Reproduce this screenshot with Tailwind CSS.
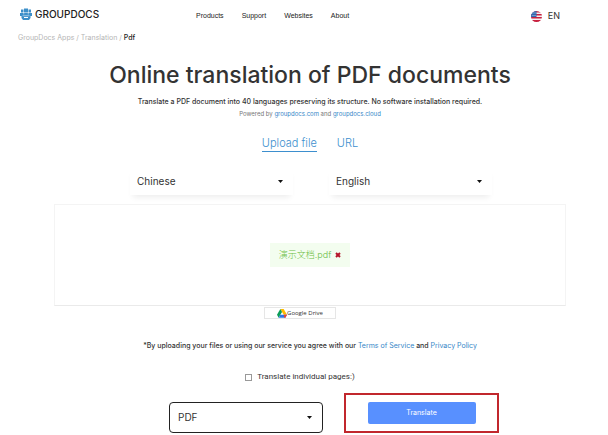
<!DOCTYPE html>
<html lang="en">
<head>
    <meta charset="UTF-8">
    <meta name="viewport" content="width=device-width, initial-scale=1.0">
    <title>Online translation of PDF documents</title>
    <script src="https://cdn.jsdelivr.net/npm/@tailwindcss/browser@4"></script>
</head>
<body class="bg-white text-[#333] font-['Inter','Noto_Sans_CJK_SC',sans-serif]">
    <!-- Header -->
    <header class="grid grid-cols-[176px_1fr_auto] items-center h-7 pl-5 pr-12">
        <a href="#" class="flex items-center gap-[3px] text-[10px] font-medium text-[#222]">
            <svg class="w-3 h-3" viewBox="0 0 24 24" fill="#3c8fc9">
                <path d="M8 1h8v8H8zM2 3h5v6H2zM17 3h5v6h-5z"/>
                <path d="M0 10h24v6H0z"/>
                <path d="M3 15h18v5l-3 4H6l-3-4z"/>
                <path d="M7.500 9v4M16.500 9v4M5 15.500h14" stroke="#fff" stroke-width="1"/>
                <path d="M8 18h8v2H8z" fill="#fff"/>
            </svg>
            GROUPDOCS
        </a>
        <nav class="flex gap-[18px] pt-1 text-[7px] text-[#222] font-['Liberation_Sans',sans-serif]">
            <a href="#">Products</a>
            <a href="#">Support</a>
            <a href="#">Websites</a>
            <a href="#">About</a>
        </nav>
        <a href="#" class="flex items-center gap-[6px] pt-1 text-[9px]">
            <svg class="w-[11px] h-[11px]" viewBox="0 0 22 22">
                <clipPath id="flag"><circle cx="11" cy="11" r="11"/></clipPath>
                <g clip-path="url(#flag)">
                    <path fill="#f4f0f2" d="M0 0h22v22H0z"/>
                    <path fill="#c8213f" d="M0 0h22v3H0zM0 6h22v3H0zM0 12h22v3H0zM0 18h22v4H0z"/>
                    <path fill="#2f69b0" d="M0 0h11v12H0z"/>
                    <path fill="#b9cfe8" d="M3 3h2v2H3zM7 3h2v2H7zM3 8h2v2H3zM7 8h2v2H7z"/>
                </g>
            </svg>
            EN
        </a>
    </header>

    <!-- Breadcrumb -->
    <nav class="h-5 pl-[18px] text-[7px] leading-5 text-[#b5b5b5]">
        <a href="#">GroupDocs Apps</a> / <a href="#">Translation</a> / <span class="font-medium text-[#222]">Pdf</span>
    </nav>

    <main class="flex flex-col items-center pl-3 text-[7px]">
        <h1 class="mt-[11px] text-[23px] leading-8 font-medium">Online translation of PDF documents</h1>
        <p class="mt-[3px] leading-4 font-medium">Translate a PDF document into 40 languages preserving its structure. No software installation required.</p>
        <p class="text-[6px] leading-2 text-[#777]">Powered by <a href="#" class="text-[#3486c7]">groupdocs.com</a> and <a href="#" class="text-[#3486c7]">groupdocs.cloud</a></p>

        <div class="flex gap-5 mt-[17px] text-[11px] leading-4 text-[#3d8fce] font-light">
            <button type="button" class="border-b border-[#3d8fce]">Upload file</button>
            <button type="button" class="border-b border-transparent">URL</button>
        </div>

        <!-- Languages -->
        <div class="flex gap-9 mt-[15px] pl-[2px] text-[10px]">
            <label class="grid items-center w-[163px] h-7 shadow-[0_5px_6px_-3px_#00000014]">
                <select aria-label="Source language" class="col-start-1 row-start-1 appearance-none w-full h-full pl-[7px] outline-none">
                    <option>Chinese</option>
                    <option>English</option>
                </select>
                <svg class="col-start-1 row-start-1 justify-self-end mr-[10px] w-[5px] h-[3px] pointer-events-none" viewBox="0 0 5 3"><path d="M0 0h5L2.500 3z" fill="#111"/></svg>
            </label>
            <label class="grid items-center w-[163px] h-7 shadow-[0_5px_6px_-3px_#00000014]">
                <select aria-label="Target language" class="col-start-1 row-start-1 appearance-none w-full h-full pl-[7px] outline-none">
                    <option>English</option>
                    <option>Chinese</option>
                </select>
                <svg class="col-start-1 row-start-1 justify-self-end mr-[10px] w-[5px] h-[3px] pointer-events-none" viewBox="0 0 5 3"><path d="M0 0h5L2.500 3z" fill="#111"/></svg>
            </label>
        </div>

        <!-- Uploaded file -->
        <div class="flex self-stretch items-center justify-center h-[102px] mt-[9px] mx-[42px] border border-[#f4f4f4] border-b-[#eaeaea]">
            <div class="flex items-center gap-1 h-6 px-[9px] bg-[#f3fdef] text-[9px] font-light text-[#6cbd45]">
                演示文档.pdf
                <button type="button" aria-label="Remove file">
                    <svg class="w-[6px] h-[6px]" viewBox="0 0 12 12"><path d="M2 2l8 8M10 2l-8 8" stroke="#b5152b" stroke-width="4"/></svg>
                </button>
            </div>
        </div>
        <button type="button" class="flex items-center justify-center w-[72px] h-3 mt-px mr-5 border border-[#e6e6e6] text-[6px] font-medium font-['Open_Sans',sans-serif]">
            <svg class="w-[10px] h-[9px]" viewBox="0 0 87 78">
                <path d="M29 0h29l29 50H58z" fill="#ffba00"/>
                <path d="M29 0L0 50l14 26 30-50z" fill="#0b9d58"/>
                <path d="M29 50h58L73 76H14z" fill="#2b77e8"/>
                <path d="M73 76h-9L58 50h29z" fill="#ea4335"/>
            </svg>
            Google Drive
        </button>

        <p class="mt-[19px] leading-4 font-medium">*By uploading your files or using our service you agree with our <a href="#" class="font-normal text-[#3486c7]">Terms of Service</a> and <a href="#" class="font-normal text-[#3486c7]">Privacy Policy</a></p>
        <label class="flex items-center gap-[5px] mt-[15px] pr-5 leading-4 text-[8px] font-['Roboto',sans-serif]">
            <input type="checkbox" class="appearance-none w-[7px] h-[7px] border border-[#999] checked:bg-[#5890ff]">
            Translate individual pages:)
        </label>

        <!-- Output format and submit -->
        <div class="flex items-center gap-[21px] mt-2 pl-12">
            <label class="grid items-center w-[154px] h-[31px] mt-2 border border-[#222] rounded-sm text-[10px]">
                <select aria-label="Output format" class="col-start-1 row-start-1 appearance-none w-full h-full pl-2 outline-none">
                    <option>PDF</option>
                    <option>DOCX</option>
                </select>
                <svg class="col-start-1 row-start-1 justify-self-end mr-[10px] w-[5px] h-[3px] pointer-events-none" viewBox="0 0 5 3"><path d="M0 0h5L2.500 3z" fill="#111"/></svg>
            </label>
            <div class="flex items-center justify-center w-[155px] h-10 border-2 border-[#c1272d]">
                <button type="button" class="w-[108px] h-[22px] bg-[#5890ff] rounded-xs text-white text-[7px]">Translate</button>
            </div>
        </div>
    </main>
</body>
</html>
